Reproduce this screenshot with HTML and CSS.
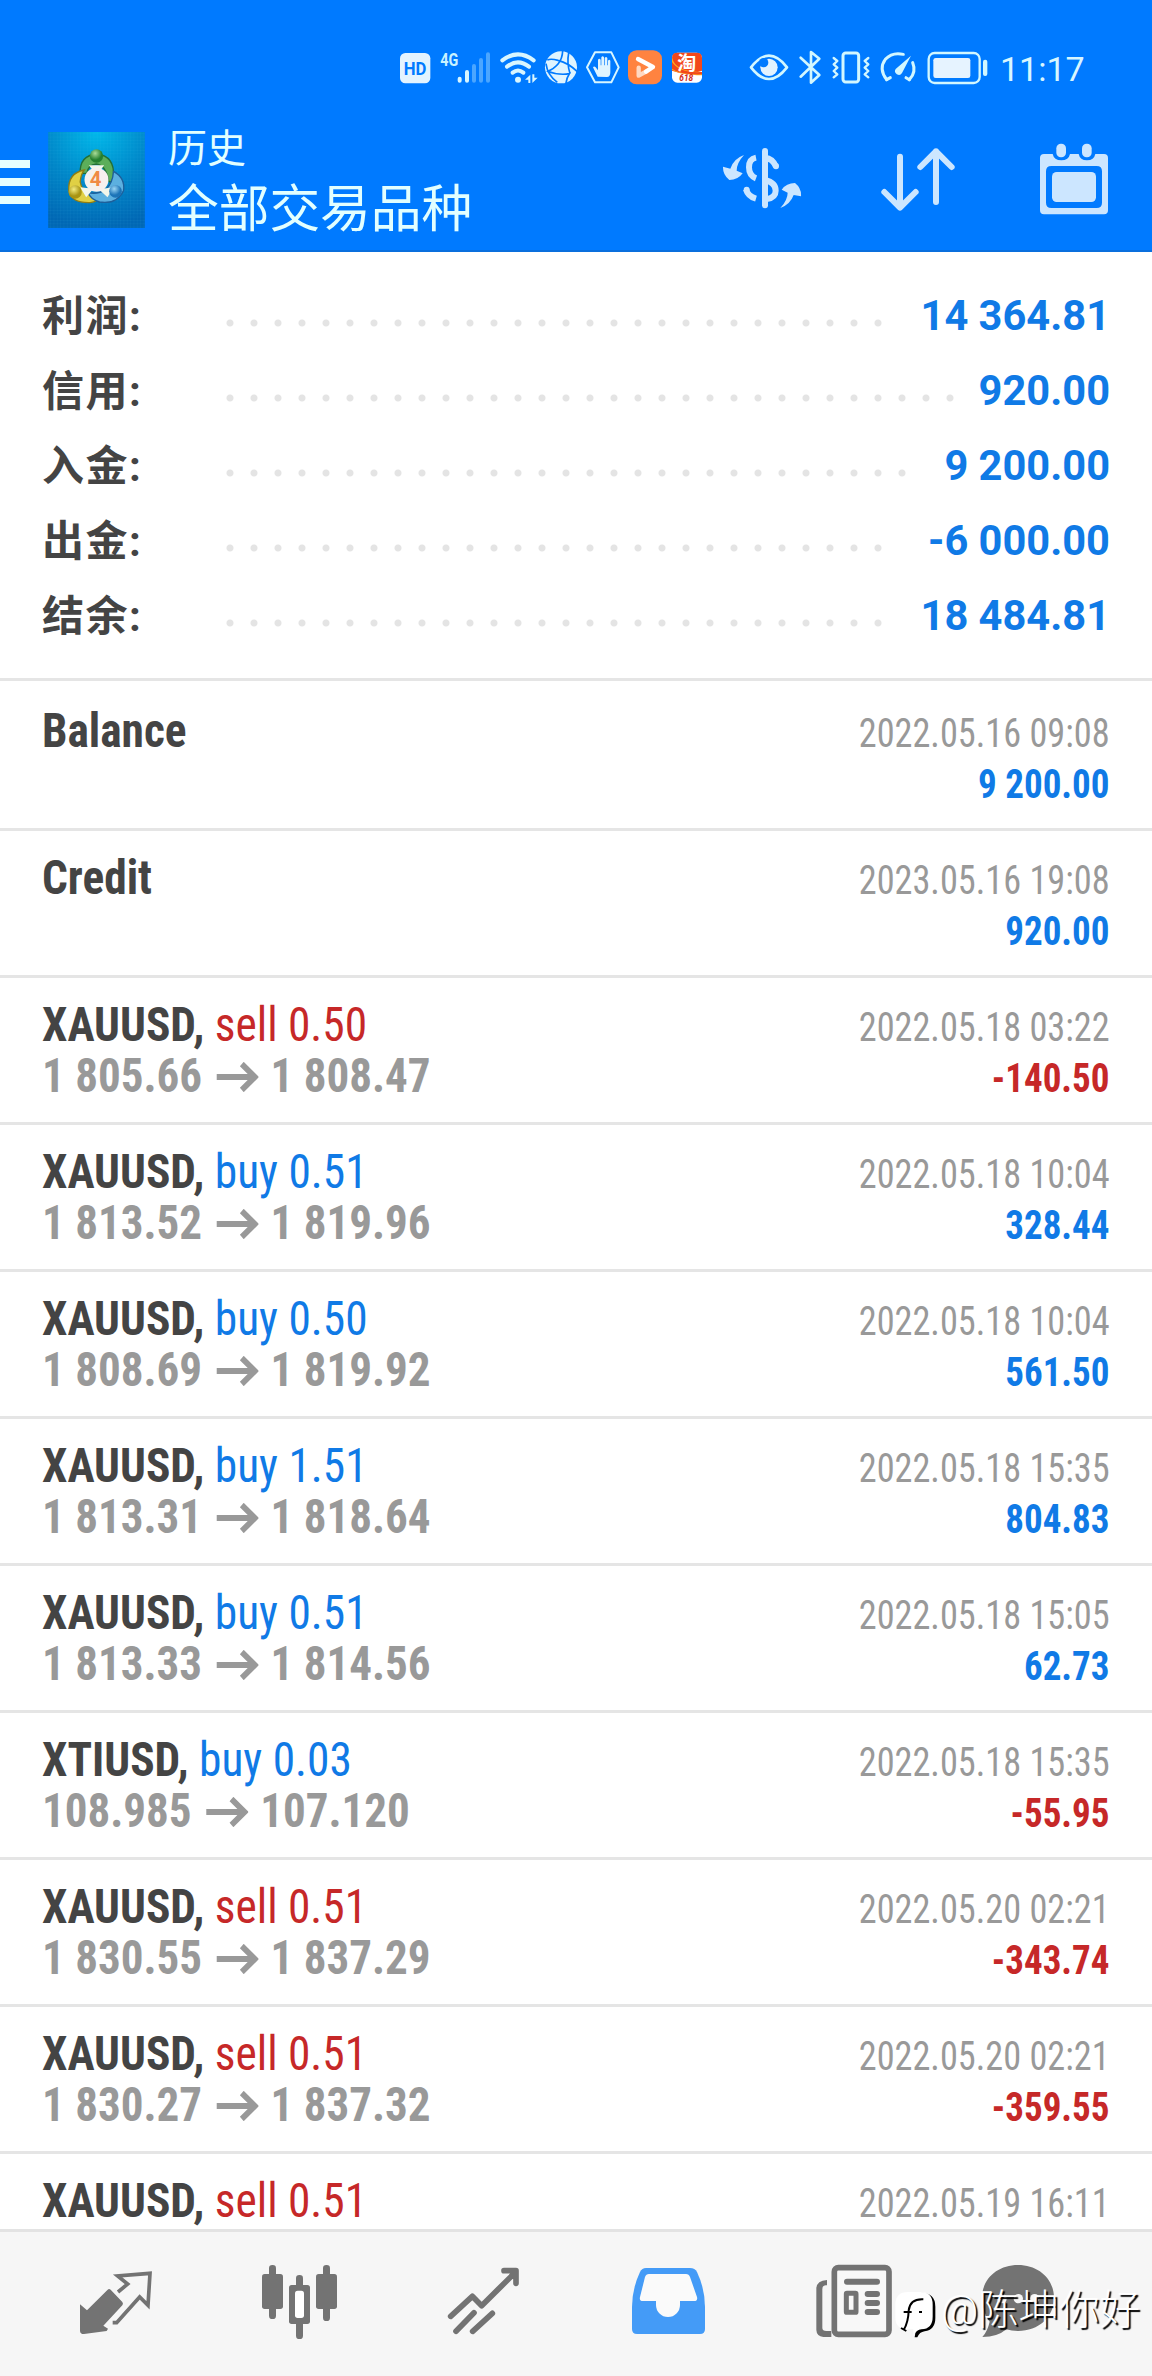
FILE: index.html
```html
<!DOCTYPE html>
<html lang="zh-CN">
<head>
<meta charset="utf-8">
<title>历史</title>
<link rel="stylesheet" href="styles.css">
</head>
<body>
<div class="screen">
  <header class="top">
    <div class="status">
      <svg class="status-left" viewBox="60 50 930 120">
        <rect x="60" y="68" width="91" height="91" rx="16" fill="#e3f3ff"/>
        <text x="71" y="134" font-size="54" font-weight="700" textLength="68" lengthAdjust="spacingAndGlyphs" fill="#007aff">HD</text>
        <text x="181" y="107" font-size="57" font-weight="700" textLength="54" lengthAdjust="spacingAndGlyphs" fill="#c9f2ff">4G</text>
        <g stroke-width="12" stroke-linecap="round">
          <path d="M239 145v6M261 125v26" stroke="#d8f6ff"/>
          <path d="M282 107v44M303 89v62M324 72v79" stroke="#4ba6ff"/>
        </g>
        <g fill="none" stroke="#d8f6ff" stroke-width="12" stroke-linecap="round">
          <path d="M367 90q47-36 94 0M381 109q33-26 66 0M398 127q16-13 32 0"/>
        </g>
        <circle cx="414" cy="148" r="9" fill="#d8f6ff"/>
        <path d="M435 148l16-15v25h-6v-10zM473 142l-16 16v-26h6v10z" fill="#d8f6ff"/>
        <circle cx="543" cy="111" r="48" fill="#dff4ff"/>
        <path d="M548 62q-2 44-47 62M534 90q32 8 58 34M500 122q37 14 68 8q-8 12-10 28M534 90q-22-6-32-1M566 68q-6 30 4 62M498 100q4 34 34 56" fill="none" stroke="#007aff" stroke-width="5"/>
        <path d="M645 66h49l22 45-22 45h-49l-24-45z" fill="none" stroke="#d8f6ff" stroke-width="6" stroke-linejoin="round"/>
        <path d="M653 139q-5-9-14-28q3-5 8 0l7 9V88q4-6 8 0v17h2V81q4-6 8 0v24h2V83q4-6 8 0v22h2V91q4-6 7 0v35q0 14-10 14z" fill="#dff4ff"/>
        <rect x="744" y="60" width="102" height="102" rx="26" fill="#ff8340"/>
        <path d="M776 112v24l22-12" fill="none" stroke="#ffd9c2" stroke-width="13" stroke-linejoin="round" stroke-linecap="round"/>
        <path d="M774 86l45 24-21 14" fill="none" stroke="#fff" stroke-width="13" stroke-linejoin="round" stroke-linecap="round"/>
        <rect x="876" y="67" width="90" height="90" rx="16" fill="#fff"/>
        <path d="M876 121V83q0-16 16-16h58q16 0 16 16v38q-44 18-90 0z" fill="#f2471b"/>
        <path d="M876 80q8 45 90 45v10q-66-2-90-17z" fill="#ffac20"/>
        <path d="M876 95q22 34 90 30v7q-65 2-90-17z" fill="#f2471b"/>
        <text x="892" y="119" font-size="57" font-weight="700" fill="#fff">淘</text>
        <text x="898" y="153" font-size="25" font-weight="700" font-style="italic" fill="#d22b20">618</text>
      </svg>
      <svg class="status-right" viewBox="45 50 735 120">
        <g fill="none" stroke="#d2f7ff" stroke-width="8" stroke-linejoin="round" stroke-linecap="round">
          <path d="M63 111Q90 76 117 76T171 111Q144 146 117 146T63 111z"/>
          <path d="M212 82l56 52-25 23V65l25 20-56 54"/>
          <rect x="339" y="68" width="47" height="87" rx="8" stroke-width="9"/>
          <path d="M311 83l11 9-11 10 11 10-11 10 11 10-11 9M415 83l-11 9 11 10-11 10 11 10-11 10 11 9" stroke-width="7"/>
          <path d="M470 148Q445 115 466 87Q487 64 520 72M548 97Q560 126 538 148" stroke-width="9"/>
          <path d="M470 148l11-6M538 148l-10-6" stroke-width="9"/>
          <rect x="596" y="68" width="153" height="90" rx="18" stroke-width="7"/>
        </g>
        <circle cx="117" cy="111" r="26" fill="#e3f3ff"/>
        <circle cx="101" cy="97" r="14" fill="#007aff"/>
        <path d="M543 76L516 128A11 11 0 1 1 497 116z" fill="#d2f7ff"/>
        <rect x="610" y="83" width="111" height="60" rx="7" fill="#e6f3ff"/>
        <rect x="759" y="88" width="13" height="49" rx="6" fill="#d2f7ff"/>
      </svg>
      <time class="clock">11:17</time>
    </div>
    <div class="appbar">
      <div class="burger"><i></i><i></i><i></i></div>
      <svg class="logo" viewBox="144 66 290 288">
        <defs>
          <radialGradient id="sky" cx=".5" cy="0" r="1"><stop offset="0" stop-color="#00b8ea"/><stop offset=".55" stop-color="#0086c8"/><stop offset="1" stop-color="#0067b4"/></radialGradient>
          <pattern id="mesh" width="10" height="10" patternUnits="userSpaceOnUse"><path d="M0 0h10M0 0v10" stroke="#4fd0ee" stroke-opacity=".15" stroke-width="2"/></pattern>
          <radialGradient id="gr" cx=".4" cy=".3"><stop offset="0" stop-color="#a9dc98"/><stop offset="1" stop-color="#25802f"/></radialGradient>
          <radialGradient id="ye" cx=".4" cy=".3"><stop offset="0" stop-color="#f3ec80"/><stop offset="1" stop-color="#a89413"/></radialGradient>
          <radialGradient id="bl" cx=".4" cy=".3"><stop offset="0" stop-color="#9bd6f5"/><stop offset="1" stop-color="#1c74b8"/></radialGradient>
        </defs>
        <rect x="144" y="66" width="290" height="288" fill="url(#sky)"/>
        <rect x="144" y="66" width="290" height="288" fill="url(#mesh)"/>
        <path d="M240 190q-2-54 50-58q54 6 50 68q-6 22-14 14q-10-50-38-52q-24 2-28 28z" fill="#5cae5a" stroke="#236f35" stroke-width="4"/>
        <path d="M252 180q-50 10-46 62q8 38 64 36q34-6 12-18q-40-20-42-44q2-22 12-36z" fill="#e0d044" stroke="#8e7c14" stroke-width="4"/>
        <path d="M340 184q36 20 30 58q-20 42-72 34q-28-10-34-28q30 6 54-10q20-20 22-54z" fill="#5cb0e0" stroke="#1d5f9a" stroke-width="4"/>
        <path d="M266 166h46l-22 30zM240 232l40 4-22 26zM340 232l-44 6 26 24z" fill="#f2f6ea"/>
        <circle cx="289" cy="138" r="20" fill="url(#gr)"/>
        <circle cx="225" cy="246" r="20" fill="url(#ye)"/>
        <circle cx="346" cy="244" r="19" fill="url(#bl)"/>
        <circle cx="289" cy="209" r="36" fill="#f6f0ee"/>
        <text x="269" y="229" font-size="58" font-weight="700" textLength="35" lengthAdjust="spacingAndGlyphs" fill="#f08a45">4</text>
      </svg>
      <div class="titles">
        <div class="sub">历史</div>
        <div class="main">全部交易品种</div>
      </div>
      <div class="actions">
        <svg viewBox="96 60 240 240">
          <g fill="none" stroke="#cce6ff" stroke-width="18" stroke-linecap="round">
            <path d="M225 93v163"/>
            <path d="M258 140q-10-25-33-27M198 113q-21 4-21 29 0 25 21 33M168 208q6 21 30 28M225 180q32 8 32 32 0 21-27 25" stroke-linecap="butt"/>
            <path d="M258 138v1M170 209v1"/>
          </g>
          <path d="M162 105q-22 24-22 47l18 8q-14 20-40 20-20-16-19-40l22 6q10-30 41-41zM271 264q22-24 22-46l-18-9q14-20 40-20 20 16 18 40l-22-4q-10 28-40 39z" fill="#cce6ff"/>
        </svg>
        <svg viewBox="564 60 240 240">
          <path d="M630 110v152M583 216l47 47 47-47M738 246V94M691 141l47-47 47 47" fill="none" stroke="#cce6ff" stroke-width="18" stroke-linecap="round" stroke-linejoin="round"/>
        </svg>
        <svg viewBox="1032 60 240 240">
          <path fill-rule="evenodd" d="M1062 102h26q4 19 26 19t26-19h26q4 19 25 19t25-19h26q12 0 12 12v157q0 12-12 12h-180q-12 0-12-12V114q0-12 12-12zM1084 138q-16 0-16 16v94q0 16 16 16h136q16 0 16-16v-94q0-16-16-16z" fill="#cce6ff"/>
          <rect x="1086" y="156" width="132" height="90" rx="14" fill="#cce6ff"/>
          <rect x="1099" y="71" width="29" height="41" rx="14" fill="#cce6ff"/>
          <rect x="1176" y="71" width="29" height="41" rx="14" fill="#cce6ff"/>
        </svg>
      </div>
    </div>
  </header>

  <section class="summary">
    <div class="sum"><span class="label">利润:</span><span class="dots d28"></span><span class="value">14 364.81</span></div>
    <div class="sum"><span class="label">信用:</span><span class="dots d31"></span><span class="value">920.00</span></div>
    <div class="sum"><span class="label">入金:</span><span class="dots d29"></span><span class="value">9 200.00</span></div>
    <div class="sum"><span class="label">出金:</span><span class="dots d28"></span><span class="value">-6 000.00</span></div>
    <div class="sum"><span class="label">结余:</span><span class="dots d28"></span><span class="value">18 484.81</span></div>
  </section>

  <main class="deals">
    <article class="deal first"><div class="name"><b>Balance</b></div><div class="date">2022.05.16 09:08</div><div class="price"></div><div class="amount buy">9 200.00</div></article>
    <article class="deal"><div class="name"><b>Credit</b></div><div class="date">2023.05.16 19:08</div><div class="price"></div><div class="amount buy">920.00</div></article>
    <article class="deal"><div class="name"><b>XAUUSD,</b> <span class="sell">sell 0.50</span></div><div class="date">2022.05.18 03:22</div><div class="price">1 805.66 <svg class="arrow" viewBox="0 0 45 30"><path d="M0 15h40M27 2l14 13-14 13"/></svg> 1 808.47</div><div class="amount sell">-140.50</div></article>
    <article class="deal"><div class="name"><b>XAUUSD,</b> <span class="buy">buy 0.51</span></div><div class="date">2022.05.18 10:04</div><div class="price">1 813.52 <svg class="arrow" viewBox="0 0 45 30"><path d="M0 15h40M27 2l14 13-14 13"/></svg> 1 819.96</div><div class="amount buy">328.44</div></article>
    <article class="deal"><div class="name"><b>XAUUSD,</b> <span class="buy">buy 0.50</span></div><div class="date">2022.05.18 10:04</div><div class="price">1 808.69 <svg class="arrow" viewBox="0 0 45 30"><path d="M0 15h40M27 2l14 13-14 13"/></svg> 1 819.92</div><div class="amount buy">561.50</div></article>
    <article class="deal"><div class="name"><b>XAUUSD,</b> <span class="buy">buy 1.51</span></div><div class="date">2022.05.18 15:35</div><div class="price">1 813.31 <svg class="arrow" viewBox="0 0 45 30"><path d="M0 15h40M27 2l14 13-14 13"/></svg> 1 818.64</div><div class="amount buy">804.83</div></article>
    <article class="deal"><div class="name"><b>XAUUSD,</b> <span class="buy">buy 0.51</span></div><div class="date">2022.05.18 15:05</div><div class="price">1 813.33 <svg class="arrow" viewBox="0 0 45 30"><path d="M0 15h40M27 2l14 13-14 13"/></svg> 1 814.56</div><div class="amount buy">62.73</div></article>
    <article class="deal"><div class="name"><b>XTIUSD,</b> <span class="buy">buy 0.03</span></div><div class="date">2022.05.18 15:35</div><div class="price">108.985 <svg class="arrow" viewBox="0 0 45 30"><path d="M0 15h40M27 2l14 13-14 13"/></svg> 107.120</div><div class="amount sell">-55.95</div></article>
    <article class="deal"><div class="name"><b>XAUUSD,</b> <span class="sell">sell 0.51</span></div><div class="date">2022.05.20 02:21</div><div class="price">1 830.55 <svg class="arrow" viewBox="0 0 45 30"><path d="M0 15h40M27 2l14 13-14 13"/></svg> 1 837.29</div><div class="amount sell">-343.74</div></article>
    <article class="deal"><div class="name"><b>XAUUSD,</b> <span class="sell">sell 0.51</span></div><div class="date">2022.05.20 02:21</div><div class="price">1 830.27 <svg class="arrow" viewBox="0 0 45 30"><path d="M0 15h40M27 2l14 13-14 13"/></svg> 1 837.32</div><div class="amount sell">-359.55</div></article>
    <article class="deal"><div class="name"><b>XAUUSD,</b> <span class="sell">sell 0.51</span></div><div class="date">2022.05.19 16:11</div></article>
  </main>

  <nav class="tabs">
    <svg viewBox="-108 21 552 432">
      <path d="M60 238l21 18 62-62q4-4 9 0l35 37q4 5 0 10l-57 61 14 9-4 7-68 9q-12 0-12-10z" fill="#737373"/>
      <path d="M174 201l29-24-30-24 97-8-6 96-25-25-69 77h-12" fill="none" stroke="#737373" stroke-width="11"/>
    </svg>
    <svg viewBox="444 21 552 432" fill="#737373">
      <rect x="627" y="120" width="21" height="162" rx="10"/><rect x="606" y="147" width="63" height="105" rx="8"/>
      <rect x="789" y="120" width="21" height="168" rx="10"/><rect x="768" y="147" width="63" height="105" rx="8"/>
      <rect x="708" y="150" width="21" height="192" rx="10"/><rect x="687" y="180" width="63" height="117" rx="8"/>
      <rect x="705" y="197" width="27" height="82" rx="8" fill="#fff"/>
    </svg>
    <svg viewBox="996 21 552 432">
      <path d="M1172 274l65-60 28 28L1366 142M1332 137h36v38M1188 319l54-56M1238 319l59-54" fill="none" stroke="#737373" stroke-width="17" stroke-linecap="round" stroke-linejoin="round"/>
    </svg>
    <svg viewBox="0 0 184 144">
      <path d="M70 36h44q5 0 7 4 8 17 8 35v22q0 5-5 5H61q-5 0-5-5V75q0-18 8-35 2-4 6-4z" fill="#449bf7"/>
      <path d="M73 42h37q3 0 4 3l7 20q1 4-3 4h-14v4a12 12 0 0 1-24 0v-4H67q-4 0-3-4l5-20q1-3 4-3z" fill="#fafafa"/>
    </svg>
    <svg viewBox="-120 -24 552 432">
      <path d="M81 120v16q-15-2-14 14v114q0 9 12 9h15v18H70q-20-2-21-21V144q2-22 32-24z" fill="#737373"/>
      <rect x="103" y="83" width="164" height="200" rx="12" fill="#f8f8f8" stroke="#737373" stroke-width="17"/>
      <path d="M141 125h90M203 162h28M203 189h28M203 216h28" stroke="#737373" stroke-width="18" stroke-linecap="round"/>
      <rect x="139" y="160" width="29" height="57" rx="2" fill="#f8f8f8" stroke="#737373" stroke-width="15"/>
    </svg>
    <svg viewBox="432 -24 552 432">
      <path d="M654 75c62 0 108 42 108 99s-46 99-108 99q-20 0-35-5-26 23-72 23 16-18 22-46-23-30-23-71c0-57 46-99 108-99z" fill="#737373"/>
      <circle cx="606" cy="176" r="14" fill="#f6f6f6"/><circle cx="655" cy="176" r="14" fill="#f6f6f6"/><circle cx="704" cy="176" r="14" fill="#f6f6f6"/>
    </svg>
    <div class="mark">
      <svg viewBox="282 150 126 144">
        <path d="M362 158q44 0 44 42v34q0 36-32 40-16 2-22 18h-8l4-26 40-30z" fill="#000"/>
        <path d="M324 156h38q36 0 36 38v36q0 36-34 38-14 0-24 20v-20h-18q-36 0-36-36v-38q0-38 38-38z" fill="#fff"/>
        <path d="M311 270q14-24 15-58 4-36 44-34M311 216h24M357 216h9M303 264l16 9" fill="none" stroke="#000" stroke-width="6"/>
      </svg>
      <span>@陈坤你好</span>
    </div>
  </nav>
</div>
</body>
</html>
```
FILE: styles.css
```css
* { box-sizing: border-box; }

body {
  margin: 0;
  background: #fff;
  font-family: Roboto, "Noto Sans CJK SC", sans-serif;
}

svg { display: block; flex: none; }

.screen {
  position: relative;
  display: flex;
  flex-direction: column;
  width: 1152px;
  height: 2376px;
  overflow: hidden;
}

.top {
  flex: none;
  height: 252px;
  background: #007aff;
  border-bottom: 2px solid #0a6fdd;
}

.status {
  display: flex;
  height: 120px;
  padding: 47px 0 0 400px;
}
.status-left { width: 310px; height: 40px; }
.status-right { width: 245px; height: 40px; margin-left: 35px; }
.clock {
  margin-left: 10px;
  font-size: 34px;
  line-height: 44px;
  color: #d8f6ff;
}

.appbar { display: flex; height: 130px; }
.burger {
  display: flex;
  flex-direction: column;
  gap: 10px;
  width: 30px;
  margin: 40px 18px 0 0;
}
.burger i { height: 8px; background: #e6ffff; }
.logo { width: 97px; height: 96px; margin-top: 12px; }
.titles { margin-left: 23px; color: #e2ffff; white-space: nowrap; }
.sub { margin-top: 7px; font-size: 39px; line-height: 44px; }
.main { margin-top: 8px; font-size: 50.7px; line-height: 62px; }
.actions {
  display: flex;
  gap: 76px;
  margin: 20px 38px 0 auto;
}
.actions svg { width: 80px; height: 80px; }

.summary {
  flex: none;
  height: 429px;
  padding: 26px 42px 0;
  border-bottom: 3px solid #e5e5e5;
}
.sum {
  display: flex;
  align-items: center;
  height: 75px;
  font-size: 42px;
  font-weight: 700;
  line-height: 75px;
}
.label {
  width: 176px;
  padding-top: 2px;
  letter-spacing: 1.5px;
  color: #444;
}
.dots {
  height: 8px;
  margin-top: 15px;
  background: radial-gradient(circle, #e4e4e4 3px, transparent 4px) 0 0 / 24px 8px;
}
.d28 { width: 672px; }
.d29 { width: 696px; }
.d31 { width: 744px; }
.value { margin-left: auto; font-size: 41.6px; color: #107ae6; }

.deals {
  flex: 1;
  min-height: 0;
  overflow: hidden;
  font-family: "Roboto Condensed", Roboto, sans-serif;
  font-stretch: 75%;
}
.deal {
  display: grid;
  grid-template-columns: 1fr auto;
  grid-template-rows: 51px 51px;
  height: 147px;
  padding: 21px 42px 0;
  border-bottom: 3px solid #e5e5e5;
  white-space: nowrap;
}
.first { height: 150px; padding-top: 24px; }

/* The list face is set narrower than the regular condensed cut. */
.name, .price {
  font-size: 48px;
  line-height: 51px;
  transform-origin: left;
}
.name { transform: scaleX(.945); }
.name b { color: #444; }
.price { font-weight: 700; color: #999; transform: scaleX(.938); }
.date, .amount {
  text-align: right;
  font-size: 40px;
  line-height: 57px;
  transform-origin: right;
}
.date { color: #999; transform: scaleX(.907); }
.amount { font-weight: 700; transform: scaleX(.926); }
.buy { color: #107ae6; }
.sell { color: #c62828; }
.arrow {
  display: inline-block;
  width: 45px;
  height: 30px;
  margin: 0 2px 0 4px;
}
.arrow path { fill: none; stroke: #999; stroke-width: 6; }

.tabs {
  position: relative;
  flex: none;
  display: flex;
  height: 147px;
  padding-left: 24px;
  border-top: 3px solid #e3e3e3;
  background: #f6f6f6;
}
.tabs > svg { width: 184px; height: 144px; }

.mark {
  position: absolute;
  left: 894px;
  top: 58px;
  display: flex;
  align-items: center;
  font-size: 40.5px;
  font-weight: 300;
  color: #fff;
  white-space: nowrap;
}
.mark svg { width: 42px; height: 48px; }
.mark span { margin: -9px 0 0 5px; line-height: 40px; text-shadow: 2px 2px 1px #000; }
```
